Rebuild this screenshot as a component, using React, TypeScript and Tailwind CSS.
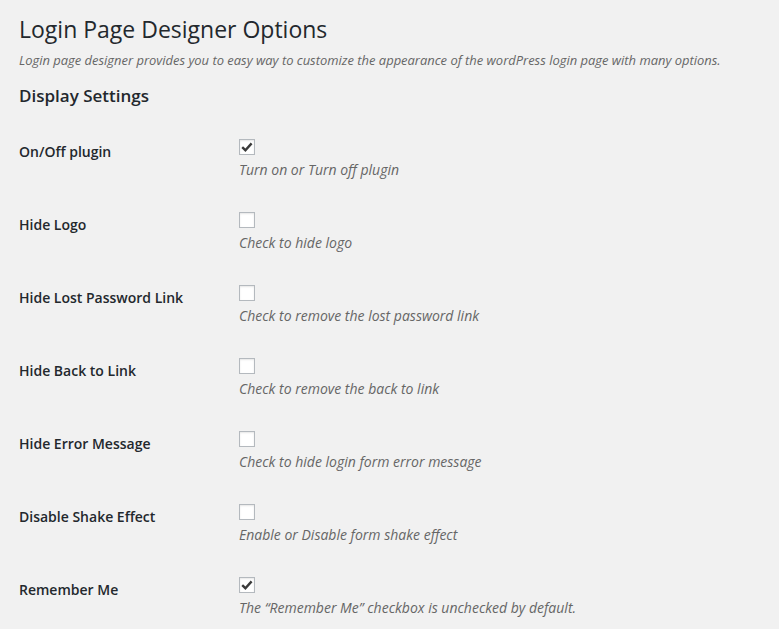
import React from "react";

const rows: { label: string; desc: string; checked: boolean }[] = [
  { label: "On/Off plugin", desc: "Turn on or Turn off plugin", checked: true },
  { label: "Hide Logo", desc: "Check to hide logo", checked: false },
  { label: "Hide Lost Password Link", desc: "Check to remove the lost password link", checked: false },
  { label: "Hide Back to Link", desc: "Check to remove the back to link", checked: false },
  { label: "Hide Error Message", desc: "Check to hide login form error message", checked: false },
  { label: "Disable Shake Effect", desc: "Enable or Disable form shake effect", checked: false },
  { label: "Remember Me", desc: "The \u201cRemember Me\u201d checkbox is unchecked by default.", checked: true },
];

function Checkbox({ checked }: { checked: boolean }) {
  return (
    <span className="flex h-4 w-4 items-center justify-center border border-[#b4b9be] bg-white shadow-[inset_0_1px_2px_rgba(0,0,0,0.1)]">
      {checked && (
        <svg width="14" height="14" viewBox="0 0 14 14">
          <path d="M2.2 7.2 L5.4 10.2 L11.6 3.4" fill="none" stroke="#3a3a3a" strokeWidth="2.4" strokeLinejoin="miter" strokeLinecap="butt" />
        </svg>
      )}
    </span>
  );
}

export default function App() {
  return (
    <div className="min-h-[629px] w-full bg-[#f1f1f1] pl-[19px] pr-5 text-[#23282d] [font-family:'Open_Sans',sans-serif]">
      <h1 className="pt-[15px] text-[23px] font-normal leading-[29px]">Login Page Designer Options</h1>
      <p className="mt-[6px] text-[12.95px] italic leading-[20px] text-[#666]">
        Login page designer provides you to easy way to customize the appearance of the wordPress login page with many options.
      </p>
      <h2 className="mt-[14px] text-[17px] font-semibold leading-[24px]">Display Settings</h2>
      <div className="mt-[16px]">
        {rows.map((r) => (
          <div key={r.label} className="flex h-[73px]">
            <div className="w-[220px] pt-[19px] text-[14px] font-semibold leading-[18px]">{r.label}</div>
            <div className="pt-[15px]">
              <div className="h-[21px]">
                <Checkbox checked={r.checked} />
              </div>
              <p className="text-[14px] italic leading-[20px] text-[#666]">{r.desc}</p>
            </div>
          </div>
        ))}
      </div>
    </div>
  );
}
